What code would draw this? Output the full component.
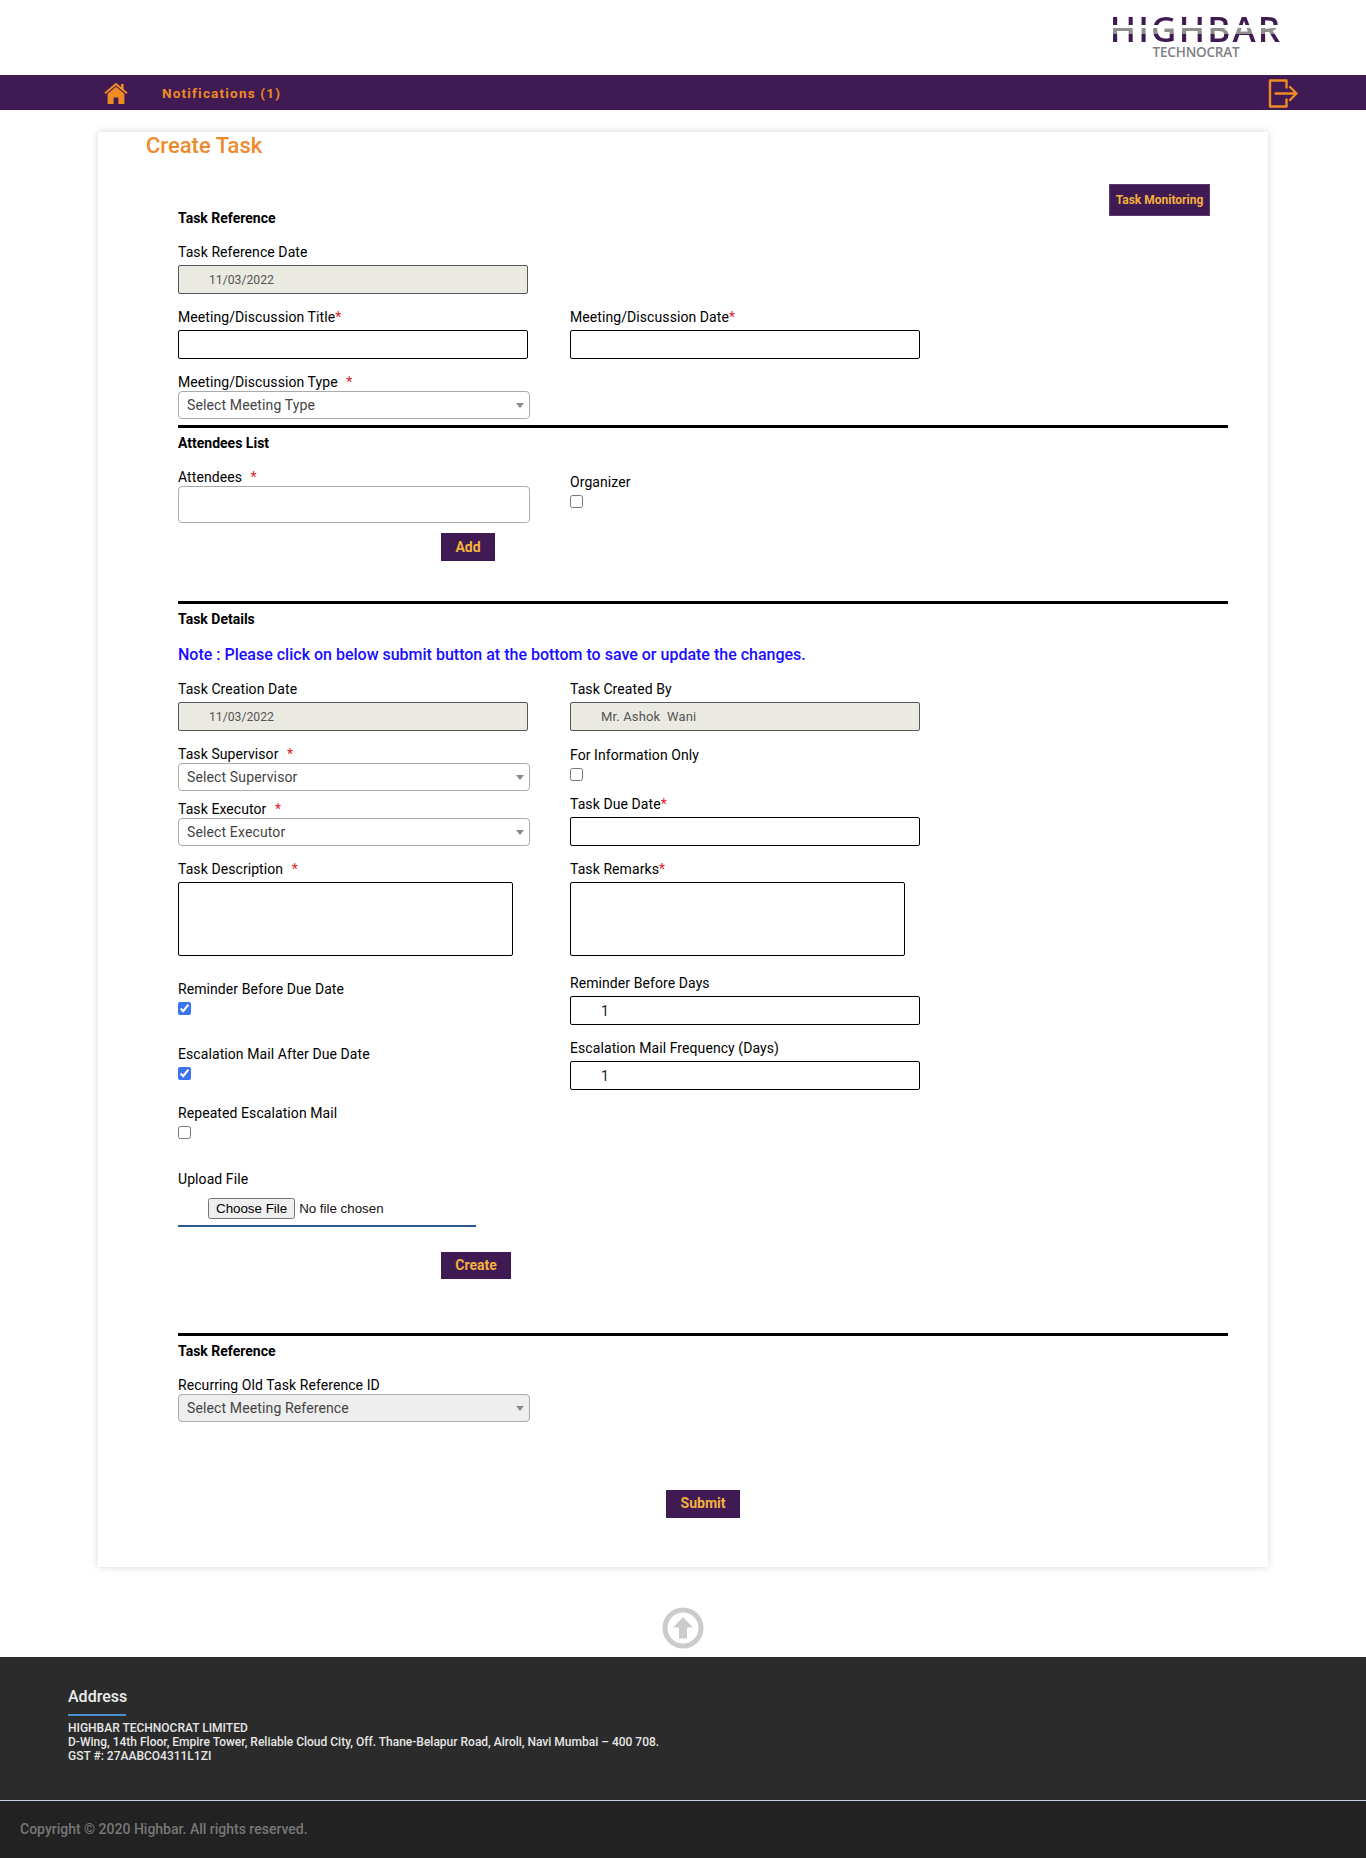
<script>
  const supervisorOptions = ['Select Supervisor'];
</script>

<div class="page">
  <header class="top">
    <div class="logo">
      <span class="logo-main">HIGHBAR</span>
      <span class="logo-sub">TECHNOCRAT</span>
    </div>
  </header>
  <nav class="nav">
    <svg class="home" viewBox="0 0 24 22" aria-hidden="true">
      <path d="M12 0.8 L0.4 10.6 L1.6 12 L12 3.4 L22.4 12 L23.6 10.6 L19.6 7.2 L19.6 2 L17 2 L17 5 Z" fill="#ef8b24"/>
      <path d="M12 4.8 L3.6 11.8 L3.6 22 L9.6 22 L9.6 15.4 L14.4 15.4 L14.4 22 L20.4 22 L20.4 11.8 Z" fill="#ef8b24"/>
    </svg>
    <span class="notif">Notifications (1)</span>
    <svg class="exit" viewBox="0 0 30 30" aria-hidden="true">
      <path d="M18.5 9.5 V2.5 H2 V28.5 H18.5 V21.5" fill="none" stroke="#ef8b24" stroke-width="2.4" stroke-linejoin="round" stroke-linecap="round"/>
      <path d="M7.5 15.5 H28 M22 9 L28.5 15.5 L22 22" fill="none" stroke="#ef8b24" stroke-width="2.4" stroke-linejoin="round" stroke-linecap="round"/>
    </svg>
  </nav>

  <main class="card">
    <h1>Create Task</h1>

    <div class="head-row">
      <h2 class="first-head">Task Reference</h2>
      <button class="btn monitor" type="button">Task Monitoring</button>
    </div>

    <div class="field m18">
      <label>Task Reference Date</label>
      <input class="text disabled date" value="11/03/2022" disabled />
    </div>

    <div class="cols m15">
      <div class="field">
        <label>Meeting/Discussion Title<i>*</i></label>
        <input class="text" />
      </div>
      <div class="field">
        <label>Meeting/Discussion Date<i>*</i></label>
        <input class="text" />
      </div>
    </div>

    <div class="field m15">
      <label class="tight">Meeting/Discussion Type <i class="gap">*</i></label>
      <div class="select">Select Meeting Type</div>
    </div>

    <hr class="m6" />
    <h2 class="m7">Attendees List</h2>

    <div class="cols m18">
      <div class="field">
        <label class="tight">Attendees <i class="gap">*</i></label>
        <input class="soft" />
      </div>
      <div class="field organizer">
        <label>Organizer</label>
        <input class="check" type="checkbox" />
      </div>
    </div>

    <button class="btn add" type="button">Add</button>

    <hr class="m40" />
    <h2 class="m7">Task Details</h2>
    <p class="note">Note : Please click on below submit button at the bottom to save or update the changes.</p>

    <div class="cols m16">
      <div class="col">
        <div class="field">
          <label>Task Creation Date</label>
          <input class="text disabled date" value="11/03/2022" disabled />
        </div>
        <div class="field m15">
          <label class="tight">Task Supervisor <i class="gap">*</i></label>
          <div class="select">{supervisorOptions[0]}</div>
        </div>
        <div class="field m10">
          <label class="tight">Task Executor <i class="gap">*</i></label>
          <div class="select">Select Executor</div>
        </div>
        <div class="field m15">
          <label>Task Description <i class="gap">*</i></label>
          <textarea></textarea>
        </div>
        <div class="field m25">
          <label>Reminder Before Due Date</label>
          <input class="check" type="checkbox" checked />
        </div>
        <div class="field m31">
          <label>Escalation Mail After Due Date</label>
          <input class="check" type="checkbox" checked />
        </div>
        <div class="field m25">
          <label>Repeated Escalation Mail</label>
          <input class="check" type="checkbox" />
        </div>
      </div>
      <div class="col">
        <div class="field">
          <label>Task Created By</label>
          <input class="text disabled name" value="Mr. Ashok  Wani" disabled />
        </div>
        <div class="field m16">
          <label>For Information Only</label>
          <input class="check" type="checkbox" />
        </div>
        <div class="field m15">
          <label>Task Due Date<i>*</i></label>
          <input class="text" />
        </div>
        <div class="field m15">
          <label>Task Remarks<i>*</i></label>
          <textarea></textarea>
        </div>
        <div class="field m19">
          <label>Reminder Before Days</label>
          <input class="text" value="1" />
        </div>
        <div class="field m15">
          <label>Escalation Mail Frequency (Days)</label>
          <input class="text" value="1" />
        </div>
      </div>
    </div>

    <div class="upload-label">Upload File</div>
    <div class="upload"><input class="file" type="file" /></div>

    <button class="btn create" type="button">Create</button>

    <hr class="m54" />
    <h2 class="m7">Task Reference</h2>

    <div class="field m18">
      <label class="tight">Recurring Old Task Reference ID</label>
      <div class="select grey">Select Meeting Reference</div>
    </div>

    <button class="btn submit" type="button">Submit</button>
  </main>

  <div class="up-wrap">
    <svg class="up" viewBox="0 0 42 42" aria-hidden="true">
      <circle cx="21" cy="21" r="18" fill="#fff" stroke="#cbcbcb" stroke-width="5"/>
      <path d="M21 10 L31 20.5 H25 V31.5 H17 V20.5 H11 Z" fill="#cbcbcb"/>
    </svg>
  </div>

  <footer>
    <div class="foot-main">
      <h3>Address</h3>
      <div class="rule"></div>
      <p>HIGHBAR TECHNOCRAT LIMITED<br />D-Wing, 14th Floor, Empire Tower, Reliable Cloud City, Off. Thane-Belapur Road, Airoli, Navi Mumbai – 400 708.<br />GST #: 27AABCO4311L1ZI</p>
    </div>
    <div class="foot-copy">Copyright © 2020 Highbar. All rights reserved.</div>
  </footer>
</div>

<style>
  :global(body) { margin: 0; background: #fff; }
  .page { width: 1366px; font-family: Roboto, "Liberation Sans", sans-serif; color: #000; font-size: 14px; }

  .top { height: 75px; display: flex; justify-content: flex-end; }
  .logo { width: 172px; margin: 14px 84px 0 0; display: flex; flex-direction: column; align-items: center; }
  .logo-main {
    height: 30px; font-family: "Open Sans", sans-serif; font-size: 35px; line-height: 30px; font-weight: 600; letter-spacing: 2.2px; white-space: nowrap;
    color: transparent;
    background: linear-gradient(#3f1a53 0 11px, #fff 11px 14.5px, #8f8f8f 14.5px 20px, #3f1a53 20px 30px);
    -webkit-background-clip: text; background-clip: text;
  }
  .logo-sub { font-family: "Open Sans", sans-serif; font-size: 13.5px; line-height: 14px; font-weight: 600; color: #808080; margin-top: 1px; letter-spacing: -0.2px; }

  .nav { height: 35px; background: #3f1a53; display: flex; align-items: center; position: relative; }
  .home { width: 24px; height: 22px; margin-left: 104px; }
  .notif { margin-left: 34px; padding-top: 1px; color: #ef8b24; font-size: 13.5px; font-weight: 700; letter-spacing: 1.2px; }
  .exit { width: 30px; height: 30px; margin-left: auto; margin-right: 68px; }

  .card {
    width: 1170px; box-sizing: border-box; margin: 22px 0 0 98px; padding: 0 40px 49px 80px; height: 1435px;
    box-shadow: 0 0 8px rgba(0, 0, 0, 0.16); background: #fff;
  }
  h1 { margin: 0 0 0 -32px; padding-top: 1px; font-size: 22px; line-height: 26px; font-weight: 500; color: #ef8a2c; height: 26px; }
  h2 { margin: 0; font-size: 14px; line-height: 16px; font-weight: 700; height: 16px; }
  .head-row { display: flex; justify-content: space-between; align-items: flex-start; margin-top: 25px; height: 42px; }
  .first-head { margin-top: 26px; }
  .btn {
    display: block; border: 0; border-radius: 0; padding: 0; background: #3f1a53; color: #f4b13d;
    font-family: Roboto, sans-serif; font-size: 14px; font-weight: 700;
  }
  .monitor { width: 101px; height: 32px; font-size: 12px; margin-right: 18px; border: 1px solid #5b3a6c; box-sizing: border-box; }
  .add { width: 54px; height: 28px; margin: 10px 0 0 263px; }
  .create { width: 70px; height: 27px; margin: 25px 0 0 263px; padding-bottom: 2px; }
  .submit { width: 74px; height: 28px; margin: 68px 0 0 488px; padding-bottom: 2px; }

  .cols { display: grid; grid-template-columns: 392px 349px; }
  .col { display: flex; flex-direction: column; }
  .organizer { padding-top: 5px; }
  label { display: block; height: 16px; line-height: 16px; margin-bottom: 5px; font-size: 14px; letter-spacing: 0.08px; white-space: pre; }
  label.tight { margin-bottom: 1px; }
  label i { font-style: normal; color: #e0202a; }
  label i.gap { margin-left: 5px; }

  .text {
    display: block; box-sizing: border-box; width: 350px; height: 29px; padding: 0 30px; margin: 0;
    border: 1px solid #000; border-radius: 2px; background: #fff; font: 14px Roboto, sans-serif; color: #222;
  }
  .disabled { background: #eaeae3; border-color: #555; color: #555; opacity: 1; }
  .date { font-size: 12.2px; }
  .name { font-size: 13px; letter-spacing: 0.15px; }
  .select {
    position: relative; box-sizing: border-box; width: 352px; height: 28px; line-height: 26px; padding-left: 8px;
    border: 1px solid #aaa; border-radius: 4px; background: #fff; color: #444; font-size: 14px; letter-spacing: 0.13px;
  }
  .select::after {
    content: ""; position: absolute; right: 5px; top: 11px;
    border-style: solid; border-width: 5px 4px 0 4px; border-color: #888 transparent transparent transparent;
  }
  .grey { background: #eee; }
  .soft {
    display: block; box-sizing: border-box; width: 352px; height: 37px; margin: 0;
    border: 1px solid #aaa; border-radius: 4px; background: #fff;
  }
  textarea {
    display: block; box-sizing: border-box; width: 335px; height: 74px; margin: 0; padding: 2px;
    border: 1px solid #000; border-radius: 2px; background: #fff; resize: none;
  }
  .check { display: block; width: 13px; height: 13px; margin: 0; accent-color: #3b74f2; }

  hr { border: 0; height: 3px; background: #000; margin-bottom: 0; margin-left: 0; margin-right: 0; }
  .note { margin: 18px 0 0; height: 20px; line-height: 20px; font-size: 16px; font-weight: 500; color: #1a0dff; }

  .upload-label { margin-top: 32px; height: 16px; line-height: 16px; letter-spacing: 0.08px; }
  .upload { margin-top: 11px; padding-left: 30px; height: 27px; width: 268px; border-bottom: 2px solid #2c5a8e; }
  .file { display: block; font: 13.33px Arial, "Liberation Sans", sans-serif; color: #111; height: 21px; width: 230px; padding: 0; }

  .m6 { margin-top: 6px; }
  .m7 { margin-top: 7px; }
  .m10 { margin-top: 10px; }
  .m15 { margin-top: 15px; }
  .m16 { margin-top: 16px; }
  .m18 { margin-top: 18px; }
  .m19 { margin-top: 19px; }
  .m25 { margin-top: 25px; }
  .m31 { margin-top: 31px; }
  .m40 { margin-top: 40px; }
  .m54 { margin-top: 54px; }

  .up-wrap { height: 90px; box-sizing: border-box; padding-top: 40px; display: flex; justify-content: center; }
  .up { width: 42px; height: 42px; }

  footer { height: 201px; background: #2b2b2b; display: flex; flex-direction: column; }
  .foot-main { height: 144px; box-sizing: border-box; padding: 30px 0 0 68px; color: #e6e6e6; border-bottom: 1px solid #c5cfe0; }
  h3 { margin: 0; font-size: 16px; line-height: 20px; font-weight: 500; color: #eee; }
  .rule { width: 58px; height: 2px; background: #4a90cf; margin-top: 7px; }
  p { margin: 5px 0 0; font-size: 12px; line-height: 14px; font-weight: 500; }
  .note { margin-top: 18px; font-size: 16px; line-height: 20px; }
  .foot-copy { flex: 1; background: #222; color: #777; font-size: 14px; font-weight: 500; padding: 19px 0 0 20px; line-height: 18px; }
</style>
